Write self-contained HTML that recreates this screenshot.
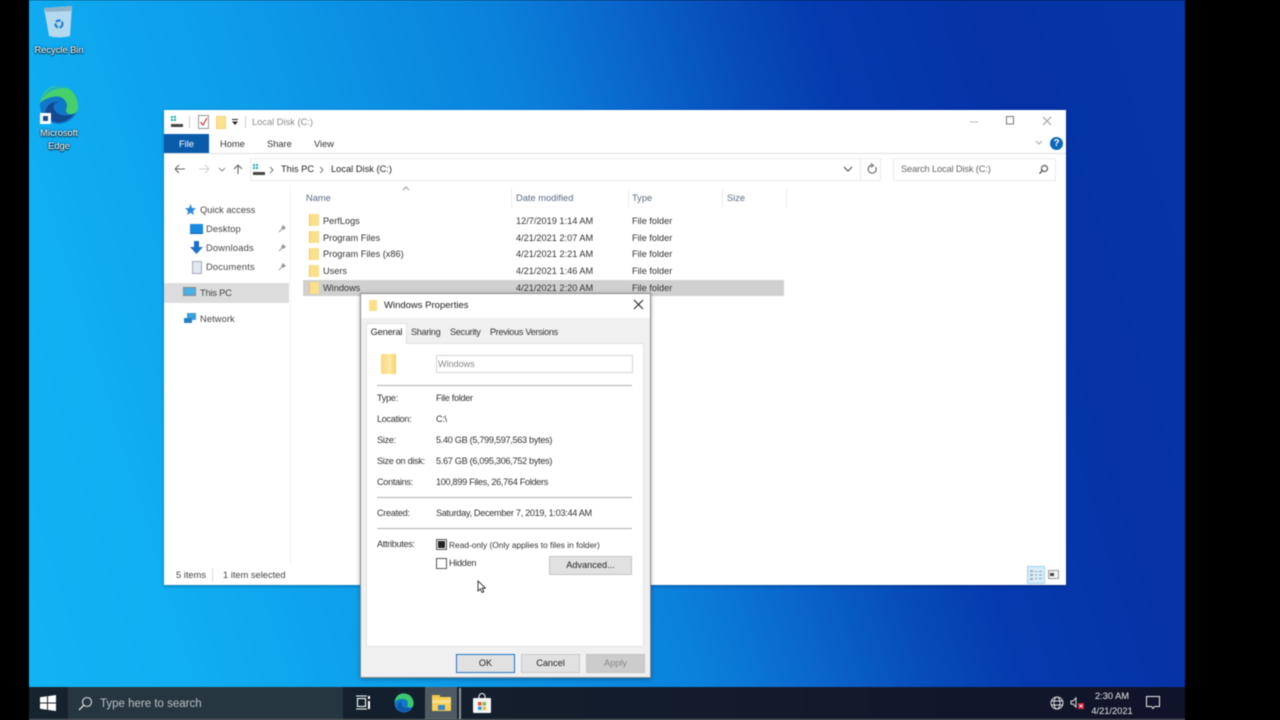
<!DOCTYPE html>
<html><head><meta charset="utf-8"><style>
html,body{margin:0;padding:0;width:1280px;height:720px;overflow:hidden;background:#000}
*{box-sizing:border-box}
body{font-family:"Liberation Sans",sans-serif;font-size:9.3px;color:#222;position:relative}
#wrap{position:absolute;left:0;top:0;width:1280px;height:720px;filter:blur(.4px)}
.a{position:absolute;white-space:nowrap}
#desk{position:absolute;left:29px;top:0;width:1156px;height:687px;overflow:hidden;background:linear-gradient(73deg,#11b4f5 0%,#10aef2 12%,#0d9ce9 30%,#0a82dc 49%,#0a66cc 58%,#074cb9 66%,#053aae 73%,#0533a6 85%,#0636a8 100%)}
.dl{color:#fff;text-shadow:0 0 2px #000,0 1px 1px #000;text-align:center;font-size:9.3px;line-height:13px}
#win{position:absolute;left:164px;top:110px;width:902px;height:475px;background:#fff;box-shadow:0 1px 3px rgba(0,0,40,.35)}
.g{color:#666}
.folder{position:absolute;width:10px;height:12px;background:#fbe08a;border-left:1px solid #eec860}
.hd{color:#5a6a80;font-size:9.3px}
.row{font-size:9.2px;color:#333}
.sep{position:absolute;width:1px;background:#ececec}
.side{font-size:9.3px;color:#444}
#dlg{position:absolute;left:360px;top:293px;width:291px;height:385px;background:#f0f0f0;border:1px solid #8a8a8a;box-shadow:0 1px 4px rgba(0,0,0,.35)}
.lbl{font-size:9.15px;color:#333;letter-spacing:-.3px}
.btn{position:absolute;background:#e1e1e1;text-align:center;font-size:9.2px;line-height:17px;height:19px;color:#222}
.hr{position:absolute;height:1px;background:#b0b0b0}
#tb{position:absolute;left:29px;top:687px;width:1156px;height:33px;background:linear-gradient(90deg,#16242e,#131b2c 60%,#10142a)}
#tb .t{color:#e8e8e8}
</style></head><body><div id="wrap">
<div id="desk"></div>

<!-- Recycle bin -->
<svg class="a" style="left:43px;top:4px" width="32" height="35" viewBox="0 0 32 35"><path d="M1 4 L29 2 L27 32 Q16 35 6 32Z" fill="#b4d9ee"/><path d="M1 4 L29 2 L28 7 L3 8Z" fill="#8fb1c6"/><circle cx="16" cy="20" r="3.500" fill="none" stroke="#1d7fd0" stroke-width="2.200" stroke-dasharray="5 1.500"/></svg>
<div class="a dl" style="left:29px;top:44px;width:60px">Recycle Bin</div>
<!-- Edge -->
<svg class="a" style="left:39px;top:85px" width="40" height="40" viewBox="0 0 40 40"><circle cx="20" cy="20" r="19" fill="#0f78c8"/><path d="M1 18 C3 4 14 0 21 1 C33 2 40 12 39 23 C39 28 34 30 30 29 C26 28 27 24 28 21 C28 14 21 10 14 12 C7 13 3 16 1 18Z" fill="#45d06c"/><path d="M2 15 C6 5 14 1 21 1 C27 1 31 3 33 5 C25 1 10 3 2 15Z" fill="#1fb0cc"/><path d="M20 17 C14 17 13 23 17 27 C22 32 32 31 36 28 C30 36 18 42 9 33 C3 26 9 16 20 17Z" fill="#14488f"/></svg>
<div class="a" style="left:40px;top:113px;width:11px;height:11px;background:#fff"></div>
<div class="a" style="left:43px;top:116px;width:5px;height:5px;background:#1b4f8f"></div>
<div class="a dl" style="left:29px;top:127px;width:60px">Microsoft<br>Edge</div>

<!-- Explorer window -->
<div id="win">
<svg class="a" style="left:6px;top:5px" width="14" height="14"><rect x="1" y="1" width="2" height="2" fill="#1aa"/><rect x="4" y="1" width="2" height="2" fill="#1aa"/><rect x="1" y="4" width="2" height="2" fill="#1aa"/><rect x="4" y="4" width="2" height="2" fill="#1aa"/><rect x="1" y="9" width="12" height="3" fill="#444"/></svg>
<div class="a" style="left:25px;top:6px;width:1px;height:12px;background:#ccc"></div>
<svg class="a" style="left:34px;top:5px" width="11" height="14"><rect x=".5" y=".5" width="10" height="13" fill="#fff" stroke="#999"/><path d="M2.500 7 L5 10 L9 3" fill="none" stroke="#c33" stroke-width="1.200"/></svg>
<div class="a" style="left:52px;top:6px;width:10px;height:13px;background:#fbe28e;border:1px solid #f3d573"></div>
<svg class="a" style="left:68px;top:9px" width="7" height="7"><rect y="0" width="6" height="1" fill="#222"/><path d="M0 2.500H6L3 6Z" fill="#222"/></svg>
<div class="a" style="left:81px;top:6px;width:1px;height:12px;background:#ccc"></div>
<div class="a" style="left:88px;top:7px;color:#8a8a8a;font-size:9.300px">Local Disk (C:)</div>
<svg class="a" style="left:804px;top:6px" width="90" height="12"><path d="M2 6H10" stroke="#bbb"/><rect x="38.500" y=".5" width="7" height="7.500" fill="none" stroke="#777"/><path d="M75 1L83 9M83 1L75 9" stroke="#999"/></svg>
<div class="a" style="left:0;top:24px;width:45px;height:19px;background:#0a5cab;color:#fff;text-align:center;line-height:20px;font-size:9.300px">File</div>
<div class="a" style="left:56px;top:29px;font-size:9.300px;color:#333">Home</div>
<div class="a" style="left:103px;top:29px;font-size:9.300px;color:#333">Share</div>
<div class="a" style="left:150px;top:29px;font-size:9.300px;color:#333">View</div>
<div class="a" style="left:0;top:43px;width:902px;height:1px;background:#e0e0e0"></div>
<svg class="a" style="left:871px;top:30px" width="8" height="6"><path d="M1 1L4 4L7 1" fill="none" stroke="#aaa"/></svg>
<div class="a" style="left:886px;top:27px;width:13px;height:13px;border-radius:50%;background:#0a66b8;color:#fff;font-size:10px;font-weight:bold;text-align:center;line-height:13px">?</div>
<svg class="a" style="left:8px;top:52px" width="76" height="14"><path d="M3 7H13M3 7L7 3M3 7L7 11" fill="none" stroke="#666" stroke-width="1.100"/><path d="M27 7H37M37 7L33 3M37 7L33 11" fill="none" stroke="#d0d0d0" stroke-width="1.100"/><path d="M47 6L50 9L53 6" fill="none" stroke="#888"/><path d="M66 12V3M66 3L62 7M66 3L70 7" fill="none" stroke="#666" stroke-width="1.100"/></svg>
<div class="a" style="left:86px;top:48px;width:631px;height:23px;border:1px solid #eaeaea"></div>
<div class="a" style="left:696px;top:48px;width:1px;height:23px;background:#eaeaea"></div>
<svg class="a" style="left:88px;top:53px" width="14" height="13"><rect x="1" y="1" width="2" height="2" fill="#1aa"/><rect x="4" y="1" width="2" height="2" fill="#1aa"/><rect x="1" y="4" width="2" height="2" fill="#1aa"/><rect x="4" y="4" width="2" height="2" fill="#1aa"/><rect x="1" y="9" width="12" height="3" fill="#444"/></svg>
<svg class="a" style="left:105px;top:56px" width="6" height="8"><path d="M1 1L4 4L1 7" fill="none" stroke="#777"/></svg>
<div class="a" style="left:117px;top:54px;font-size:9.300px;color:#222">This PC</div>
<svg class="a" style="left:155px;top:56px" width="6" height="8"><path d="M1 1L4 4L1 7" fill="none" stroke="#777"/></svg>
<div class="a" style="left:167px;top:54px;font-size:9.300px;color:#222">Local Disk (C:)</div>
<svg class="a" style="left:679px;top:56px" width="10" height="7"><path d="M1 1L5 5L9 1" fill="none" stroke="#555" stroke-width="1.200"/></svg>
<svg class="a" style="left:702px;top:53px" width="12" height="12"><path d="M9.500 4A4 4 0 1 1 6 2.200" fill="none" stroke="#666" stroke-width="1.100"/><path d="M5 .5L7.500 2.500L5 4.500" fill="none" stroke="#666"/></svg>
<div class="a" style="left:729px;top:48px;width:163px;height:23px;border:1px solid #eaeaea"></div>
<div class="a" style="left:737px;top:54px;font-size:9.300px;color:#666;letter-spacing:-.15px">Search Local Disk (C:)</div>
<svg class="a" style="left:874px;top:54px" width="11" height="11"><circle cx="6.500" cy="4.500" r="3" fill="none" stroke="#555" stroke-width="1.200"/><path d="M4.500 6.500L1.500 9.500" stroke="#555" stroke-width="1.400"/></svg>
<div class="sep" style="left:126px;top:75px;height:380px;background:#f3f3f3"></div>
<svg class="a" style="left:21px;top:94px" width="11" height="11"><path d="M5.500 0L7 4L11 4.200L8 7L9 11L5.500 8.800L2 11L3 7L0 4.200L4 4Z" fill="#2a8bd8"/></svg>
<div class="a side" style="left:36px;top:95px">Quick access</div>
<div class="a" style="left:26px;top:114px;width:13px;height:10px;background:#1a8ae0;border-bottom:1px solid #0a5ca8"></div>
<div class="a side" style="left:42px;top:114px;letter-spacing:.1px">Desktop</div>
<svg class="a" style="left:26px;top:131px" width="13" height="14"><path d="M4 0H9V6H13L6.500 13L0 6H4Z" fill="#1f6fc8"/></svg>
<div class="a side" style="left:42px;top:133px;letter-spacing:.2px">Downloads</div>
<div class="a" style="left:28px;top:151px;width:10px;height:13px;background:#dfe8f0;border:1px solid #aab"></div>
<div class="a side" style="left:42px;top:152px;letter-spacing:.2px">Documents</div>
<svg class="a" style="left:114px;top:114px" width="9" height="60"><g fill="#999"><path d="M5 1L8 4L5 6L3 4Z"/><path d="M5 20L8 23L5 25L3 23Z"/><path d="M5 39L8 42L5 44L3 42Z"/></g><path d="M4 5L1 8M4 24L1 27M4 43L1 46" stroke="#999"/></svg>
<div class="a" style="left:0;top:173px;width:125px;height:20px;background:#dcdcdc"></div>
<div class="a" style="left:19px;top:177px;width:13px;height:9px;background:#49b0e8;border:1px solid #888"></div>
<div class="a side" style="left:36px;top:178px;letter-spacing:-.2px">This PC</div>
<svg class="a" style="left:19px;top:202px" width="14" height="13"><rect x="4" y="1" width="9" height="7" fill="#39a0dc"/><rect x="1" y="6" width="8" height="5" fill="#2a7fc0"/></svg>
<div class="a side" style="left:36px;top:204px;letter-spacing:.1px">Network</div>
<svg class="a" style="left:238px;top:76px" width="8" height="5"><path d="M1 4L4 1L7 4" fill="none" stroke="#999"/></svg>
<div class="a hd" style="left:142px;top:82px;padding-top:1px">Name</div>
<div class="a hd" style="left:352px;top:82px;padding-top:1px">Date modified</div>
<div class="a hd" style="left:468px;top:82px;padding-top:1px">Type</div>
<div class="a hd" style="left:563px;top:82px;padding-top:1px">Size</div>
<div class="sep" style="left:347px;top:78px;height:20px"></div>
<div class="sep" style="left:464px;top:78px;height:20px"></div>
<div class="sep" style="left:558px;top:78px;height:20px"></div>
<div class="sep" style="left:622px;top:78px;height:20px"></div>
<div class="a" style="left:139px;top:170px;width:481px;height:16px;background:#d0d0d0"></div>
<div class="folder" style="left:145px;top:104px"></div><div class="a row" style="left:159px;top:106px">PerfLogs</div><div class="a row g" style="left:352px;top:106px">12/7/2019 1:14 AM</div><div class="a row g" style="left:468px;top:106px">File folder</div>
<div class="folder" style="left:145px;top:121px"></div><div class="a row" style="left:159px;top:123px">Program Files</div><div class="a row g" style="left:352px;top:123px">4/21/2021 2:07 AM</div><div class="a row g" style="left:468px;top:123px">File folder</div>
<div class="folder" style="left:145px;top:138px"></div><div class="a row" style="left:159px;top:139px">Program Files (x86)</div><div class="a row g" style="left:352px;top:139px">4/21/2021 2:21 AM</div><div class="a row g" style="left:468px;top:139px">File folder</div>
<div class="folder" style="left:145px;top:155px"></div><div class="a row" style="left:159px;top:156px">Users</div><div class="a row g" style="left:352px;top:156px">4/21/2021 1:46 AM</div><div class="a row g" style="left:468px;top:156px">File folder</div>
<div class="folder" style="left:145px;top:172px"></div><div class="a row" style="left:159px;top:173px">Windows</div><div class="a row g" style="left:352px;top:173px">4/21/2021 2:20 AM</div><div class="a row g" style="left:468px;top:173px">File folder</div>
<div class="a" style="left:12px;top:460px;font-size:9.300px;color:#444">5 items</div>
<div class="a" style="left:48px;top:458px;width:1px;height:14px;background:#ddd"></div>
<div class="a" style="left:59px;top:460px;font-size:9.300px;color:#444">1 item selected</div>
<div class="a" style="left:863px;top:456px;width:18px;height:18px;background:#d8eefa;border:1px solid #9fd4ee"></div>
<svg class="a" style="left:866px;top:459px" width="30" height="12"><g stroke="#8a9aa8"><path d="M5 2.500H7M9 2.500H12M5 6H7M9 6H12M5 9.500H7M9 9.500H12"/></g><rect x="0" y="1" width="3" height="2" fill="#aab"/><rect x="0" y="5" width="3" height="2" fill="#aab"/><rect x="0" y="9" width="3" height="2" fill="#aab"/><rect x="18.500" y="1.500" width="10" height="8" fill="#f4f4f4" stroke="#999"/><rect x="20" y="4" width="4" height="3" fill="#444"/></svg>
</div>

<!-- Dialog -->
<div id="dlg">
<div class="a" style="left:0;top:0;width:289px;height:24px;background:#fff"></div>
<div class="a" style="left:8px;top:6px;width:8px;height:11px;background:#fbe08a"></div>
<div class="a" style="left:23px;top:6px;font-size:9.500px;color:#222">Windows Properties</div>
<svg class="a" style="left:272px;top:5px" width="11" height="11"><path d="M1 1L10 10M10 1L1 10" stroke="#222" stroke-width="1.100"/></svg>
<div class="a" style="left:5px;top:49px;width:278px;height:304px;background:#fff;border:1px solid #e2e2e2"></div>
<div class="a" style="left:5px;top:29px;width:41px;height:21px;background:#fff;border:1px solid #e2e2e2;border-bottom:0;text-align:center;line-height:16px;font-size:9.200px;letter-spacing:-.15px;color:#222">General</div>
<div class="a lbl" style="left:50px;top:33px">Sharing</div>
<div class="a lbl" style="left:89px;top:33px">Security</div>
<div class="a lbl" style="left:129px;top:33px">Previous Versions</div>
<div class="a" style="left:20px;top:60px;width:15px;height:20px;background:linear-gradient(90deg,#f8da7e,#fbe9a8 60%,#f5cf62)"></div>
<div class="a" style="left:75px;top:61px;width:197px;height:18px;border:1px solid #d4d4d4;background:#fff;font-size:9.200px;color:#8a8a8a;padding:3px 0 0 1px;letter-spacing:-.1px">Windows</div>
<div class="hr" style="left:16px;top:91px;width:255px"></div>

<div class="a lbl" style="left:16px;top:99px">Type:</div><div class="a lbl" style="left:75px;top:99px">File folder</div>
<div class="a lbl" style="left:16px;top:120px">Location:</div><div class="a lbl" style="left:75px;top:120px">C:\</div>
<div class="a lbl" style="left:16px;top:141px">Size:</div><div class="a lbl" style="left:75px;top:141px">5.40 GB (5,799,597,563 bytes)</div>
<div class="a lbl" style="left:16px;top:162px">Size on disk:</div><div class="a lbl" style="left:75px;top:162px">5.67 GB (6,095,306,752 bytes)</div>
<div class="a lbl" style="left:16px;top:183px">Contains:</div><div class="a lbl" style="left:75px;top:183px">100,899 Files, 26,764 Folders</div>
<div class="hr" style="left:16px;top:203px;width:255px"></div>
<div class="a lbl" style="left:16px;top:214px">Created:</div><div class="a lbl" style="left:75px;top:214px">Saturday, December 7, 2019, 1:03:44 AM</div>
<div class="hr" style="left:16px;top:234px;width:255px"></div>
<div class="a lbl" style="left:16px;top:245px">Attributes:</div>
<div class="a" style="left:75px;top:245px;width:11px;height:11px;border:1px solid #555;background:#fff"></div>
<div class="a" style="left:77px;top:247px;width:7px;height:7px;background:#222"></div>
<div class="a lbl" style="left:88px;top:246px;font-size:8.400px;letter-spacing:0">Read-only (Only applies to files in folder)</div>
<div class="a" style="left:75px;top:264px;width:11px;height:11px;border:1px solid #555;background:#fff"></div>
<div class="a lbl" style="left:88px;top:264px">Hidden</div>
<div class="btn" style="left:188px;top:262px;width:83px;border:1px solid #c4c4c4">Advanced...</div>
<svg class="a" style="left:116px;top:286px;z-index:3" width="9" height="14"><path d="M1 1V11L3.500 8.800L5 12.500L6.800 11.800L5.300 8.200H8.500Z" fill="#fff" stroke="#111" stroke-width=".8"/></svg>
<div class="btn" style="left:95px;top:360px;width:59px;border:1.500px solid #1f77c9">OK</div>
<div class="btn" style="left:160px;top:360px;width:59px;border:1px solid #c8c8c8">Cancel</div>
<div class="btn" style="left:225px;top:360px;width:59px;background:#ccc;color:#888;border:1px solid #c4c4c4">Apply</div>
</div>

<!-- Taskbar -->
<div id="tb">
<div class="a" style="left:39px;top:0;width:275px;height:32px;background:#263640"></div>
<div class="a" style="left:0;top:32px;width:1156px;height:1px;background:#6a7278"></div>
<svg class="a" style="left:11px;top:8px" width="16" height="16"><path d="M0 2.300L7 1.300V7.500H0ZM8 1.100L16 0V7.500H8ZM0 8.500H7V14.700L0 13.700ZM8 8.500H16V16L8 14.900Z" fill="#fff"/></svg>
<svg class="a" style="left:49px;top:9px" width="15" height="15"><circle cx="9" cy="6" r="4.500" fill="none" stroke="#ddd" stroke-width="1.100"/><path d="M5.500 9.500L1 14" stroke="#ddd" stroke-width="1.300"/></svg>
<div class="a" style="left:71px;top:10px;padding-top:1px;font-size:11.500px;color:#b9c0c5">Type here to search</div>
<svg class="a" style="left:327px;top:8px" width="15" height="15"><g fill="none" stroke="#fff" stroke-width="1.100"><rect x="1.500" y="3.500" width="8" height="8"/><path d="M0 1H11M0 14H11"/></g><rect x="12" y="1" width="2" height="3" fill="#fff"/><rect x="12" y="6" width="2" height="8" fill="#fff"/></svg>
<svg class="a" style="left:365px;top:6px" width="20" height="20" viewBox="0 0 40 40"><circle cx="20" cy="20" r="19" fill="#0f78c8"/><path d="M1 18 C3 4 14 0 21 1 C33 2 40 12 39 23 C39 28 34 30 30 29 C26 28 27 24 28 21 C28 14 21 10 14 12 C7 13 3 16 1 18Z" fill="#3cc86f"/><path d="M20 17 C14 17 13 23 17 27 C22 32 32 31 36 28 C30 36 18 42 9 33 C3 26 9 16 20 17Z" fill="#1155a8"/></svg>
<div class="a" style="left:396px;top:0;width:32px;height:32px;background:#4f5a64"></div>
<div class="a" style="left:430px;top:1px;width:2px;height:31px;background:#8c959c"></div>
<svg class="a" style="left:403px;top:8px" width="19" height="16"><rect y="0" width="8" height="3" fill="#f5c242"/><rect y="2" width="19" height="14" fill="#f8ce55"/><rect y="5" width="19" height="3" fill="#fbe08a"/><rect x="6" y="10" width="7" height="5" fill="#3a86c8"/></svg>
<svg class="a" style="left:444px;top:6px" width="18" height="20"><path d="M6 6V3.500A3 3 0 0 1 12 3.500V6" fill="none" stroke="#eee" stroke-width="1.100"/><rect x="0" y="5" width="18" height="15" rx="1" fill="#f4f4f4"/><rect x="5" y="9" width="3.500" height="3.500" fill="#e84c3d"/><rect x="9.500" y="9" width="3.500" height="3.500" fill="#7cbb3d"/><rect x="5" y="13.500" width="3.500" height="3.500" fill="#2f9ae0"/><rect x="9.500" y="13.500" width="3.500" height="3.500" fill="#f5b82e"/></svg>
<svg class="a" style="left:1021px;top:9px" width="14" height="14"><circle cx="7" cy="7" r="6" fill="none" stroke="#ddd"/><ellipse cx="7" cy="7" rx="3" ry="6" fill="none" stroke="#ddd"/><path d="M1 5H13M1 9H13" stroke="#ddd"/></svg>
<svg class="a" style="left:1041px;top:9px" width="14" height="14"><path d="M1 5H3L6 2V11L3 8H1Z" fill="none" stroke="#ddd"/><rect x="8" y="7" width="6" height="6" fill="#d0203a"/><path d="M9.500 8.500L12.500 11.500M12.500 8.500L9.500 11.500" stroke="#fff" stroke-width=".8"/></svg>
<div class="a t" style="left:1058px;top:2px;width:50px;text-align:center;font-size:9.300px;line-height:15px">2:30 AM<br>4/21/2021</div>
<svg class="a" style="left:1117px;top:9px" width="14" height="14"><path d="M.5 .5H13.500V10.500H8.500L7 12.500L5.500 10.500H.5Z" fill="none" stroke="#eee"/></svg>
</div>
</div></body></html>
